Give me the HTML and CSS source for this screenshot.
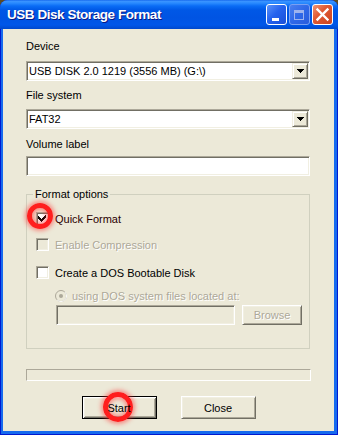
FILE: index.html
```html
<!DOCTYPE html>
<html lang="en">
<head>
<meta charset="UTF-8"/>
<title>USB Disk Storage Format</title>
<link rel="stylesheet" href="styles.css">
</head>
<body>

<!-- ─── WINDOW ─────────────────────────────────────────────── -->
<div class="window">
  <div class="titlebar">
    <span class="title">USB Disk Storage Format</span>
    <div class="caption">
      <span class="cap min"><svg viewBox="0 0 19 19"><rect x="5" y="13" width="7" height="3" fill="#fff"/></svg></span>
      <span class="cap max"><svg viewBox="0 0 19 19"><path d="M4 5h10v10h-10z M5 8v6h8v-6z" fill="#9db3ee" fill-rule="evenodd"/></svg></span>
      <span class="cap close"><svg viewBox="0 0 19 19"><path d="M4.5 4.5l10 10M14.5 4.5l-10 10" stroke="#fff" stroke-width="2.4" stroke-linecap="square"/></svg></span>
    </div>
  </div>

  <div class="client">
    <div class="label">Device</div>
    <div class="combo">
      <span class="value">USB DISK 2.0 1219 (3556 MB) (G:\)</span>
      <span class="drop"><svg width="7" height="4"><path d="M0 0h7v1h-1v1h-1v1h-1v1h-1v-1h-1v-1h-1v-1h-1z"/></svg></span>
    </div>

    <div class="label gap">File system</div>
    <div class="combo">
      <span class="value">FAT32</span>
      <span class="drop"><svg width="7" height="4"><path d="M0 0h7v1h-1v1h-1v1h-1v1h-1v-1h-1v-1h-1v-1h-1z"/></svg></span>
    </div>

    <div class="label gap vol">Volume label</div>
    <div class="edit"></div>

    <!-- format options -->
    <fieldset class="group">
      <legend>Format options</legend>
      <div class="group-body">
        <div class="row">
          <span class="check">
            <svg width="11" height="11" viewBox="0 0 11 11"><path d="M8 2h1v3h-1v1h-1v1h-1v1h-1v1h-1v-1h-1v-1h-1v-1h-1v-3h1v1h1v1h1v1h1v-1h1v-1h1v-1h1z"/></svg>
            <span class="ring"></span>
          </span>
          <span class="quick">Quick Format</span>
        </div>
        <div class="row off r2">
          <span class="check dis"></span>
          <span>Enable Compression</span>
        </div>
        <div class="row r3">
          <span class="check"></span>
          <span>Create a DOS Bootable Disk</span>
        </div>
        <div class="row off radio-row">
          <svg class="radio" width="12" height="12" viewBox="0 0 12 12">
            <circle cx="6" cy="6" r="5.5" fill="#ece9d8" stroke="#aca899"/>
            <path d="M9.9 2.1A5.5 5.5 0 0 1 2.1 9.9" fill="none" stroke="#fff"/>
            <circle cx="6" cy="6" r="2" fill="#aca899"/>
          </svg>
          <span>using DOS system files located at:</span>
        </div>
        <div class="path-row">
          <div class="edit dis path"></div>
          <button class="btn small off">Browse</button>
        </div>
      </div>
    </fieldset>

    <div class="progress"></div>

    <div class="actions">
      <button class="btn default"><span class="ring big"></span><span class="txt">Start</span></button>
      <button class="btn">Close</button>
    </div>
  </div>
</div>

</body>
</html>
```

FILE: styles.css
```css
:root{
  --face:#ece9d8;--light:#f1efe2;--shadow:#aca899;--dark:#716f64;
  --blue:#0054e3;
}
*,*::before,*::after{box-sizing:border-box}
body{margin:0;background:#5d4c22;font-family:"Liberation Sans",Arial,sans-serif;font-size:11px;color:#000}

/* ─── FRAME ─────────────────────────────────────────────── */
.window{width:338px;height:435px;display:flex;flex-direction:column;border-radius:8px 8px 0 0;overflow:hidden;
  background:#166aee;box-shadow:inset 1px 0 #0019cf,inset -1px 0 #0019cf,inset 0 -1px #0019cf}
.titlebar{height:29px;flex:none;display:flex;align-items:center;justify-content:space-between;
  background:linear-gradient(#0a5ce8 0,#3d95ff 1px,#2a8bff 3px,#0a6cf5 6px,#0058e6 10px,#0054e3 18px,#0057e9 25px,#0048cc 29px)}
.title{padding-left:7px;color:#fff;font-weight:bold;font-size:13.5px;letter-spacing:-.45px;text-shadow:1px 1px #0a1883}
.caption{align-self:flex-start;margin-top:4px;margin-right:5px;display:flex;gap:2px}
.cap{width:21px;height:21px;border:1px solid #fff;border-radius:3px;display:block}
.cap svg{display:block;width:19px;height:19px}
.cap.min{background:linear-gradient(135deg,#5b93f9,#2663ee 45%,#1a4fd8)}
.cap.max{background:linear-gradient(135deg,#4a7ff0,#2f68e8 50%,#2a5cdc);border-color:#7aa0f2}
.cap.close{background:linear-gradient(135deg,#f09676,#e05a34 40%,#cc4420)}

/* ─── CLIENT ────────────────────────────────────────────── */
.client{flex:1;margin:0 4px 4px 3px;background:var(--face);padding:11px 24px 0 23px}
.label{line-height:13px;margin-bottom:8px}
.label.gap{margin-top:8px;margin-bottom:7px}
.label.vol{margin-top:9px;margin-bottom:5px}

.combo,.edit{height:20px;background:#fff;border:1px solid;border-color:var(--shadow) #fff #fff var(--shadow);
  box-shadow:inset 1px 1px var(--dark),inset -1px -1px var(--light)}
.combo{display:flex;align-items:center;padding:1px}
.combo .value{flex:1;padding-left:1px;line-height:16px}
.drop{width:16px;height:16px;background:var(--face);display:flex;align-items:center;justify-content:center;
  border:1px solid;border-color:var(--light) var(--dark) var(--dark) var(--light);
  box-shadow:inset 1px 1px #fff,inset -1px -1px var(--shadow)}
.drop svg{display:block}
.edit.dis{background:var(--face)}

/* ─── GROUP ─────────────────────────────────────────────── */
.group{margin:12px 0 0;padding:0;min-width:0;border:1px solid #d0d0bf}
.group legend{margin-left:6px;padding:0 2px;line-height:13px}
.group-body{padding:11px 0 23px 9px}
.row{display:flex;align-items:center;gap:6px;height:13px}
.row.r2{margin-top:13px}
.row.r3{margin-top:15px}
.off{color:var(--shadow);text-shadow:1px 1px #fff}
.check{position:relative;width:13px;height:13px;flex:none;background:#fff;border:1px solid;
  border-color:var(--shadow) #fff #fff var(--shadow);box-shadow:inset 1px 1px var(--dark),inset -1px -1px var(--light)}
.check svg{display:block}
.check.dis{background:var(--face)}
.quick{color:#2a0000}
.radio-row{margin:11px 0 0 19px;height:12px;gap:5px}
.radio{display:block;flex:none}
.path-row{display:flex;gap:7px;margin:3px 0 0 20px}
.path{width:179px}

/* ─── BOTTOM ────────────────────────────────────────────── */
.progress{margin-top:20px;width:285px;height:12px;border:1px solid;border-color:var(--shadow) #fff #fff var(--shadow)}
.actions{display:flex;justify-content:center;gap:24px;margin-top:15px;padding-left:1px}
.btn{position:relative;width:75px;height:23px;padding:0;background:var(--face);font:inherit;color:#000;
  border:1px solid;border-color:#fff var(--dark) var(--dark) #fff;box-shadow:inset 1px 1px var(--light),inset -1px -1px var(--shadow)}
.btn.default{border-color:#000;box-shadow:inset 1px 1px #fff,inset -1px -1px var(--dark),inset 2px 2px var(--light),inset -2px -2px var(--shadow)}
.btn.small{width:60px;height:20px}
.btn.off{color:var(--shadow)}
.btn .txt{position:relative}

/* red highlight rings */
.ring{position:absolute;left:-10px;top:-10px;width:26px;height:26px;border-radius:50%;border:5px solid #ff1e1e;
  box-shadow:0 0 4px 2px rgba(255,50,50,.5),inset 0 0 4px 2px rgba(255,50,50,.5);pointer-events:none}
.ring.big{left:20px;top:-5px;width:30px;height:30px}
```
